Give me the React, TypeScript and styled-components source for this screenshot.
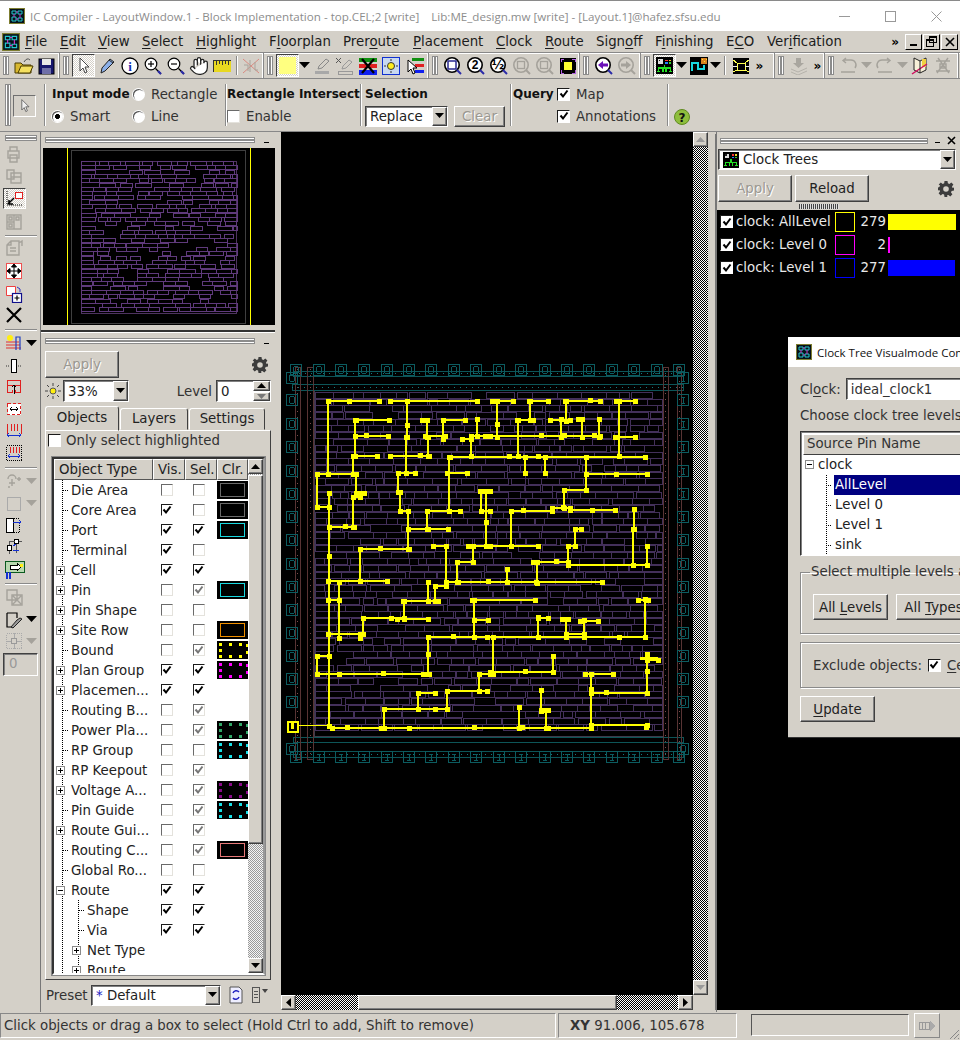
import React from "react";
import styled, { createGlobalStyle, css } from "styled-components";
import { Hand } from "lucide-react";

const FACE = "#d4d0c8";
const DIS = "#a5a29b";
const FONT = `"DejaVu Sans", sans-serif`;

const Global = createGlobalStyle`
  html, body { margin: 0; padding: 0; background: ${FACE}; }
  * { box-sizing: border-box; }
`;

const raised = css`
  border: 1px solid;
  border-color: #fff #404040 #404040 #fff;
  box-shadow: inset -1px -1px 0 #808080;
`;
const sunken = css`
  border: 1px solid;
  border-color: #404040 #fff #fff #404040;
  box-shadow: inset 1px 1px 0 #808080;
`;

const Root = styled.div`
  position: relative;
  width: 960px;
  height: 1040px;
  overflow: hidden;
  background: ${FACE};
  font: 13.33px ${FONT};
  color: #1c1c1c;
  display: flex;
  flex-direction: column;
  border-top: 1px solid #8a8a8a;
`;

/* ---------- title ---------- */
const TitleBar = styled.div`
  height: 30px;
  background: #fff;
  display: flex;
  align-items: center;
  padding-left: 9px;
  flex: none;
`;
const TitleText = styled.div`
  margin-left: 5px;
  font: 11.6px "Open Sans", sans-serif;
  color: #8d8d8d;
  white-space: pre;
  flex: 1;
`;
const WinBtn = styled.div`
  width: 46px;
  display: flex;
  justify-content: center;
  &:last-child { margin-right: 1px; }
`;

/* ---------- menu ---------- */
const MenuBar = styled.div`
  height: 21px;
  flex: none;
  display: flex;
  align-items: center;
  padding-left: 2px;
`;
const MenuList = styled.div`
  flex: 1;
  height: 21px;
  line-height: 21px;
  display: flex;
  padding-left: 5px;
`;
const MenuItem = styled.span<{ $w: number }>`
  width: ${(p) => p.$w}px;
  flex: none;
  white-space: nowrap;
  u { text-underline-offset: 2px; text-decoration-thickness: 1px; }
`;
const MdiBtn = styled.div`
  ${raised};
  box-shadow: none;
  border-color: #fff #000 #000 #fff;
  width: 17px;
  height: 16px;
  display: flex;
  align-items: center;
  justify-content: center;
`;
const Chevrons = styled.span`
  font: bold 12px ${FONT};
  color: #000;
  letter-spacing: -1px;
`;
const MdiWrap = styled.div`
  display: flex;
  align-items: center;
  gap: 1px;
  padding-right: 2px;
  ${Chevrons} { margin-right: 6px; }
`;

/* ---------- tool bar ---------- */
const ToolBar = styled.div`
  height: 27px;
  flex: none;
  display: flex;
  border-top: 1px solid #888;
  border-bottom: 1px solid #888;
  box-shadow: inset 0 1px 0 #fff;
`;
const ToolGroup = styled.div<{ $w: number }>`
  width: ${(p) => p.$w}px;
  flex: none;
  display: flex;
  align-items: center;
  padding-left: 3px;
  border-right: 1px solid #888;
  box-shadow: inset -1px 0 0 #fff;
`;
const Grip = styled.div`
  width: 6px;
  height: 19px;
  flex: none;
  margin-right: 3px;
  border: 1px solid #8c8c8c;
  background: linear-gradient(90deg, #fff 0 1px, #8c8c8c 1px 3px, #fff 3px);
`;
const Tool = styled.div<{ $w?: number; $on?: boolean }>`
  width: ${(p) => p.$w ?? 23}px;
  height: 23px;
  flex: none;
  display: flex;
  align-items: center;
  justify-content: center;
  ${(p) =>
    p.$on &&
    css`
      ${sunken};
      box-shadow: none;
      background: repeating-conic-gradient(#fff 0 25%, #d4d0c8 0 50%) 0 0 / 2px 2px;
    `}
`;
const ToolSep = styled.div`
  width: 8px;
  height: 19px;
  flex: none;
  background: linear-gradient(90deg, transparent 3px, #888 3px 4px, #fff 4px 5px, transparent 5px);
`;
const More = styled(Chevrons)`
  flex: none;
  width: 14px;
  text-align: center;
`;

/* ---------- options bar ---------- */
const OptionBar = styled.div`
  height: 53px;
  flex: none;
  display: flex;
  align-items: stretch;
  padding: 5px 0 5px 5px;
  border-bottom: 1px solid #888;
`;
const OptGrip = styled(Grip)`
  height: 100%;
  margin-right: 2px;
`;
const BigIcon = styled.div`
  border: 1px solid;
  border-color: #707070 #fff #fff #707070;
  width: 23px;
  height: 22px;
  margin: 11px 8px 0 0;
  display: flex;
  align-items: center;
  justify-content: center;
`;
const OptSep = styled.div`
  width: 2px;
  flex: none;
  background: linear-gradient(90deg, #8a8a8a 1px, #fff 1px);
`;
const OptSection = styled.div<{ $w: number; $cols: string; $pad?: number }>`
  width: ${(p) => p.$w}px;
  flex: none;
  display: grid;
  grid-template-columns: ${(p) => p.$cols};
  grid-auto-rows: 22px;
  align-items: center;
  align-content: center;
  white-space: nowrap;
  padding-left: ${(p) => p.$pad ?? 0}px;
`;
const Bold = styled.span`
  font-weight: bold;
  font-size: 12px;
  color: #111;
`;
const Labeled = styled.label`
  display: inline-flex;
  align-items: center;
  gap: 6px;
  color: #333;
`;
const RadioDot = styled.span<{ $on?: boolean }>`
  width: 11px;
  height: 11px;
  flex: none;
  margin-right: 1px;
  border-radius: 50%;
  background: ${(p) => (p.$on ? "radial-gradient(circle, #000 0 2.2px, #fff 2.8px)" : "#fff")};
  box-shadow: inset 1px 1px 0 #555, 0 0 0 1px #fff;
`;
const Box = styled.span<{ $dark?: boolean }>`
  width: 13px;
  height: 13px;
  flex: none;
  display: inline-flex;
  align-items: center;
  justify-content: center;
  background: #fff;
  border: 1px solid;
  border-color: #6a6a6a #e4e2dc #e4e2dc #6a6a6a;
  ${(p) => p.$dark && css`border-color: #1a1a1a #fff #fff #1a1a1a;`}
`;
const Check = ({ on, dim, dark }: { on?: boolean; dim?: boolean; dark?: boolean }) => (
  <Box $dark={dark}>
    {on && (
      <svg width="10" height="10" viewBox="0 0 10 10">
        <path d="M1.5 4.5 L4 7.5 L8.5 1.5" fill="none" stroke={dim ? "#777" : "#000"} strokeWidth="2" />
      </svg>
    )}
  </Box>
);
const Combo = styled.div<{ $w: number; $h?: number }>`
  ${sunken};
  width: ${(p) => p.$w}px;
  height: ${(p) => p.$h ?? 22}px;
  background: #fff;
  display: flex;
  align-items: center;
  padding-left: 4px;
  overflow: hidden;
  flex: none;
`;
const ComboText = styled.span`
  flex: 1;
  min-width: 0;
  white-space: nowrap;
  color: #222;
`;
const Star = styled.span`
  color: #2020c0;
`;
const ComboBtn = styled.div`
  ${raised};
  background: ${FACE};
  width: 15px;
  height: 100%;
  flex: none;
  display: flex;
  align-items: center;
  justify-content: center;
`;
const ComboArrow = () => (
  <ComboBtn>
    <svg width="9" height="6" viewBox="0 0 9 6">
      <path d="M0 0h9L4.5 5z" fill="#000" />
    </svg>
  </ComboBtn>
);
const PushBtn = styled.button<{ $w: number; $h?: number; $off?: boolean }>`
  ${raised};
  width: ${(p) => p.$w}px;
  height: ${(p) => p.$h ?? 27}px;
  background: ${FACE};
  font: 13.33px ${FONT};
  padding: 0;
  flex: none;
  color: ${(p) => (p.$off ? "#9b9891" : "#222")};
  text-shadow: ${(p) => (p.$off ? "1px 1px 0 #fff" : "none")};
  u { text-underline-offset: 2px; text-decoration-thickness: 1px; }
`;
const ClearCell = styled.div`
  display: flex;
  gap: 6px;
  align-items: center;
`;
const HelpWrap = styled.div`
  margin: 24px 0 0 4px;
  flex: none;
  line-height: 0;
`;

/* ---------- main ---------- */
const Main = styled.div`
  flex: 1;
  min-height: 0;
  display: flex;
`;
const SideBar = styled.div`
  width: 41px;
  flex: none;
  border-right: 1px solid #777;
  padding: 3px 0 0 0;
  display: flex;
  flex-direction: column;
  align-items: flex-start;
`;
const HGrip = styled.div<{ $w?: number }>`
  height: 6px;
  width: ${(p) => (p.$w ? `${p.$w}px` : "100%")};
  flex: none;
  border: 1px solid #8c8c8c;
  background: linear-gradient(#fff 0 1px, #8c8c8c 1px 3px, #fff 3px);
`;
const SideGrip = styled(HGrip)`
  margin: 0 0 3px 5px;
`;
const SideTool = styled.div<{ $h?: number }>`
  width: 40px;
  height: ${(p) => p.$h ?? 22}px;
  flex: none;
  display: flex;
  align-items: center;
  padding-left: 5px;
  gap: 3px;
`;
const SideOn = styled.div`
  ${sunken};
  box-shadow: none;
  width: 23px;
  height: 21px;
  display: flex;
  align-items: center;
  justify-content: center;
  margin-left: -2px;
  background: repeating-conic-gradient(#fff 0 25%, #d4d0c8 0 50%) 0 0 / 2px 2px;
`;
const SideSep = styled.div<{ $t?: number }>`
  width: 32px;
  height: 2px;
  margin: ${(p) => p.$t ?? 0}px 0 0 5px;
  flex: none;
  background: linear-gradient(#8a8a8a 1px, #fff 1px);
`;
const SideInput = styled.div`
  ${sunken};
  width: 35px;
  height: 23px;
  margin: 1px 0 0 3px;
  color: #999;
  padding: 2px 0 0 5px;
  flex: none;
`;

const Dock = styled.div`
  width: 240px;
  flex: none;
  display: flex;
  flex-direction: column;
  padding-right: 6px;
`;
const DockHead = styled.div<{ $flush?: boolean }>`
  height: 16px;
  flex: none;
  display: flex;
  align-items: center;
  padding: 0 0 0 ${(p) => (p.$flush ? 0 : 4)}px;
  gap: 9px;
`;
const Dash = styled.span`
  width: 5px;
  height: 1px;
  margin-top: 4px;
  background: #000;
  flex: none;
`;
const Minimap = styled.div`
  height: 177px;
  margin-left: 2px;
  background: #000;
  flex: none;
  line-height: 0;
`;
const Divider = styled.div`
  height: 2px;
  margin-top: 5px;
  background: #333;
  box-shadow: 0 1px 0 #fff;
  flex: none;
`;
const DockBody = styled.div`
  padding: 1px 0 0 4px;
  flex: 1;
  display: flex;
  flex-direction: column;
`;
const ApplyRow = styled.div`
  display: flex;
  align-items: center;
  justify-content: space-between;
  padding: 2px 7px 0 0;
  flex: none;
`;
const ZoomRow = styled.div`
  display: flex;
  align-items: center;
  height: 22px;
  margin-top: 2px;
  padding-right: 4px;
  flex: none;
`;
const SunWrap = styled.div`
  margin-right: 2px;
  line-height: 0;
  flex: none;
`;
const LevelLabel = styled.span`
  margin-left: auto;
  margin-right: 4px;
  color: #333;
`;
const Spin = styled.div`
  display: flex;
  flex-direction: column;
  height: 100%;
  width: 17px;
  flex: none;
  gap: 1px;
`;
const SpinBtn = styled.div`
  ${raised};
  background: ${FACE};
  flex: 1;
  display: flex;
  align-items: center;
  justify-content: center;
`;
const TabRow = styled.div`
  display: flex;
  margin-top: 4px;
  height: 24px;
  flex: none;
`;
const Tab = styled.div<{ $w: number; $on?: boolean }>`
  width: ${(p) => p.$w}px;
  height: ${(p) => (p.$on ? 25 : 22)}px;
  margin-top: ${(p) => (p.$on ? 0 : 2)}px;
  margin-right: 1px;
  border: 1px solid;
  border-color: #fff #404040 transparent #fff;
  border-radius: 3px 3px 0 0;
  text-align: center;
  line-height: ${(p) => (p.$on ? 21 : 20)}px;
  position: relative;
  z-index: 1;
  color: #222;
`;
const TabPage = styled.div`
  width: 226px;
  height: 550px;
  flex: none;
  border: 1px solid;
  border-color: #fff #404040 #404040 #fff;
  padding: 0 6px 0 6px;
`;
const OnlyRow = styled(Labeled)`
  height: 19px;
  margin: 0 0 7px -4px;
  gap: 5px;
  display: flex;
`;
const TableBox = styled.div`
  border: 2px solid;
  border-color: #333 #999 #fff #333;
  outline: 1px solid #888;
  height: 518px;
  display: flex;
  width: 213px;
  background: #fff;
`;
const TableCol = styled.div`
  flex: none;
  width: 194px;
  overflow: hidden;
`;
const TableHead = styled.div`
  display: grid;
  grid-template-columns: 99px 32px 32px 31px;
  height: 21px;
  background: ${FACE};
`;
const HeadCell = styled.div`
  border: 1px solid;
  border-color: #fff #555 #555 #fff;
  line-height: 19px;
  padding-left: 4px;
  white-space: nowrap;
  overflow: hidden;
  color: #222;
`;
const TreeRow = styled.div`
  display: grid;
  grid-template-columns: 99px 32px 32px 31px;
  height: 20px;
  align-items: center;
`;
const NameCell = styled.div<{ $depth: number }>`
  height: 20px;
  padding-left: ${(p) => (p.$depth ? 25 : 9)}px;
  display: flex;
  align-items: center;
  white-space: nowrap;
  overflow: hidden;
  color: #222;
  background-image: ${(p) =>
    p.$depth
      ? "repeating-linear-gradient(#000 0 1px, transparent 1px 2px), repeating-linear-gradient(#000 0 1px, transparent 1px 2px)"
      : "repeating-linear-gradient(#000 0 1px, transparent 1px 2px)"};
  background-size: ${(p) => (p.$depth ? "1px 100%, 1px 100%" : "1px 100%")};
  background-position: ${(p) => (p.$depth ? "8px 0, 24px 0" : "8px 0")};
  background-repeat: no-repeat;
`;
const HDots = styled.span`
  width: 6px;
  height: 1px;
  flex: none;
  margin-right: 2px;
  background: repeating-linear-gradient(90deg, #000 0 1px, transparent 1px 2px);
`;
const Expander = styled.span`
  width: 9px;
  height: 9px;
  flex: none;
  margin-left: -7px;
  margin-right: 6px;
  background: #fff;
  border: 1px solid #8a8a8a;
  display: flex;
  align-items: center;
  justify-content: center;
  line-height: 0;
`;
const CheckCell = styled.div`
  display: flex;
  justify-content: center;
  padding-right: 4px;
  ${Box} { width: 12px; height: 12px; }
`;
const SwatchCell = styled.div`
  height: 20px;
  line-height: 0;
`;
const ListScroll = styled.div`
  width: 15px;
  flex: none;
  display: flex;
  flex-direction: column;
  background: repeating-conic-gradient(#9a9a9a 0 25%, #f4f4f4 0 50%) 0 0 / 2px 2px;
`;
const ScrollBtn = styled.div`
  ${raised};
  background: ${FACE};
  width: 15px;
  height: 15px;
  flex: none;
  display: flex;
  align-items: center;
  justify-content: center;
`;
const ScrollThumb = styled.div<{ $h: number }>`
  ${raised};
  background: ${FACE};
  height: ${(p) => p.$h}px;
  flex: none;
  margin-top: 1px;
`;
const Spacer = styled.div`
  flex: 1;
`;
const PresetRow = styled.div`
  display: flex;
  align-items: center;
  height: 22px;
  margin-top: 4px;
  padding-left: 1px;
  flex: none;
  color: #333;
`;
const PresetName = styled.span`
  width: 45px;
  flex: none;
`;
const PresetIcons = styled.div`
  display: flex;
  margin-left: 7px;
  gap: 7px;
  align-items: center;
`;

const CanvasCol = styled.div`
  width: 427px;
  flex: none;
  display: flex;
  flex-direction: column;
`;
const CanvasRow = styled.div`
  height: 863px;
  flex: none;
  display: flex;
`;
const Canvas = styled.div`
  width: 412px;
  height: 100%;
  flex: none;
  background: #000;
  line-height: 0;
`;
const VScroll = styled.div`
  width: 15px;
  flex: none;
  display: flex;
  flex-direction: column;
  justify-content: space-between;
  background: repeating-conic-gradient(#000 0 25%, #fff 0 50%) 0 0 / 2px 2px;
`;
const HScroll = styled.div`
  height: 15px;
  width: 412px;
  flex: none;
  display: flex;
  background: repeating-conic-gradient(#000 0 25%, #fff 0 50%) 0 0 / 2px 2px;
`;
const HStip = styled.div<{ $w: number }>`
  width: ${(p) => p.$w}px;
  flex: none;
`;
const HThumb = styled.div`
  ${raised};
  background: ${FACE};
  width: 259px;
  flex: none;
`;

const RightDock = styled.div`
  width: 244px;
  margin-left: 8px;
  flex: none;
  display: flex;
  flex-direction: column;
  border-left: 1px solid #777;
  box-shadow: -3px 0 0 -2px #777;
`;
const RightHead = styled(DockHead)`
  padding: 0 4px 0 3px;
  gap: 7px;
  height: 17px;
`;
const PanelCombo = styled(Combo)`
  margin-left: 1px;
  gap: 4px;
`;
const RightBtns = styled.div`
  display: flex;
  align-items: center;
  gap: 3px;
  padding: 5px 6px 0 1px;
  flex: none;
`;
const GearWrap = styled.div`
  margin-left: auto;
  line-height: 0;
`;
const DragDots = styled.div`
  height: 8px;
  flex: none;
  display: flex;
  justify-content: center;
  padding: 2px 0 1px;
  &::before {
    content: "";
    width: 40px;
    margin-right: 40px;
    background: repeating-linear-gradient(90deg, #444 0 1px, #ddd 1px 2px);
  }
`;
const ClockList = styled.div`
  flex: 1;
  background: #000;
  margin-bottom: 2px;
`;
const ClockRow = styled.div`
  display: grid;
  grid-template-columns: 16px 99px 21px 32px auto;
  height: 23px;
  align-items: center;
  padding-left: 3px;
  color: #e8e8e8;
`;
const ClockLabel = styled.span`
  white-space: nowrap;
  overflow: hidden;
`;
const ClockSwatch = styled.span<{ $c: string }>`
  width: 20px;
  height: 20px;
  border: 1px solid ${(p) => p.$c};
`;
const ClockCount = styled.span`
  text-align: right;
  padding-right: 2px;
`;
const ClockBar = styled.span<{ $c: string }>`
  height: 16px;
  background: ${(p) => p.$c};
  display: block;
`;
const StatusBar = styled.div`
  height: 28px;
  flex: none;
  display: flex;
  padding-top: 1px;
  color: #333;
`;
const StatusMsg = styled.div<{ $w: number }>`
  width: ${(p) => p.$w}px;
  height: 25px;
  flex: none;
  margin-right: 2px;
  border: 1px solid;
  border-color: #888 #fff #fff #888;
  padding-left: 3px;
  line-height: 23px;
  white-space: nowrap;
  overflow: hidden;
`;
const StatusXY = styled(StatusMsg)`
  padding-left: 11px;
`;
const Progress = styled.div`
  width: 158px;
  height: 22px;
  flex: none;
  margin: 1px 0 0 12px;
  border: 1px solid;
  border-color: #555 #fff #fff #555;
`;
const StatusIco = styled.div`
  width: 26px;
  height: 25px;
  flex: none;
  margin-left: 5px;
  border: 1px solid;
  border-color: #fff #888 #888 #fff;
  display: flex;
  align-items: center;
  justify-content: center;
`;
const SizeGrip = styled.div`
  margin: auto 0 0 auto;
  line-height: 0;
  flex: none;
`;

/* ---------- dialog ---------- */
const Dialog = styled.div`
  position: absolute;
  left: 788px;
  top: 336px;
  width: 320px;
  height: 401px;
  background: ${FACE};
  border-bottom: 1px solid #333;
`;
const DlgTitle = styled.div`
  height: 30px;
  background: #fff;
  display: flex;
  align-items: center;
  padding-left: 8px;
  gap: 5px;
  font: 11.5px "Open Sans", sans-serif;
  color: #111;
  white-space: nowrap;
`;
const DlgBody = styled.div`
  padding: 11px 0 0 12px;
  color: #333;
  display: flex;
  flex-direction: column;
`;
const DlgRow = styled.div`
  display: flex;
  align-items: center;
  height: 22px;
  gap: 5px;
  flex: none;
  u { text-underline-offset: 2px; text-decoration-thickness: 1px; }
`;
const DlgText = styled.div`
  margin-top: 5px;
  height: 21px;
  line-height: 21px;
  white-space: nowrap;
  flex: none;
`;
const DlgTree = styled.div`
  border: 1px solid;
  border-color: #333 #fff #fff #333;
  box-shadow: inset 1px 1px 0 #808080;
  margin-top: 5px;
  height: 125px;
  width: 300px;
  background: #fff;
  flex: none;
  padding: 2px 0 0 2px;
  overflow: hidden;
`;
const DlgHead = styled.div`
  border: 1px solid;
  border-color: #fff #404040 #404040 #fff;
  background: ${FACE};
  height: 21px;
  line-height: 18px;
  padding-left: 3px;
  color: #333;
`;
const DlgLine = styled.div<{ $root?: boolean }>`
  height: 20px;
  display: flex;
  align-items: center;
  padding-left: ${(p) => (p.$root ? 9 : 23)}px;
  padding-bottom: ${(p) => (p.$root ? 2 : 0)}px;
  color: #222;
  background-image: ${(p) => (p.$root ? "none" : "repeating-linear-gradient(#000 0 1px, transparent 1px 2px)")};
  background-size: 1px 100%;
  background-position: 23px 0;
  background-repeat: no-repeat;
`;
const DlgRoot = styled.span`
  margin-left: -2px;
`;
const DlgLabel = styled.span<{ $sel?: boolean }>`
  ${(p) => p.$sel && css`
    background: #000080;
    color: #fff;
    flex: 1;
  `}
  height: 20px;
  line-height: 20px;
  padding-left: 1px;
`;
const Fieldset = styled.fieldset`
  margin: 9px 0 0 0;
  padding: 0 0 0 12px;
  width: 300px;
  height: 69px;
  border: 1px solid #8a8a8a;
  box-shadow: 1px 1px 0 #fff, inset 1px 1px 0 #fff;
  flex: none;
  display: flex;
  gap: 8px;
  align-items: flex-start;
  white-space: nowrap;
`;
const Legend = styled.legend`
  padding: 0 1px;
  margin-left: -3px;
  line-height: 14px;
  color: #333;
`;
const FieldBtn = styled(PushBtn)`
  margin-top: 15px;
`;
const PlainBox = styled.div`
  margin-top: 8px;
  width: 300px;
  height: 46px;
  flex: none;
  border: 1px solid #8a8a8a;
  box-shadow: 1px 1px 0 #fff, inset 1px 1px 0 #fff;
  padding-left: 12px;
  display: flex;
  align-items: center;
  gap: 6px;
  white-space: nowrap;
  u { text-underline-offset: 2px; text-decoration-thickness: 1px; }
`;
const UpdateWrap = styled.div`
  margin-top: 8px;
  flex: none;
`;

/* ---------- drawn icons ---------- */
type SP = { s?: number; children: React.ReactNode };
const I = ({ s = 20, children }: SP) => (
  <svg width={s} height={s} viewBox="0 0 20 20">
    {children}
  </svg>
);
const Logo = ({ s = 18 }: { s?: number }) => (
  <svg width={s} height={s} viewBox="0 0 16 16">
    <rect x="0.5" y="0.5" width="15" height="15" fill="#07121a" stroke="#7d7d30" />
    <path d="M3 3h4v3H3zM9 3h4v3H9zM3 9h4v4H3zM9 10h4v3H9z" fill="none" stroke="#25c8cf" />
    <path d="M7 4h2M5 6v3M7 11h2M11 6v4" stroke="#cf3ac9" fill="none" />
  </svg>
);
const ClockIcon = ({ s = 20 }: { s?: number }) => (
  <svg width={s} height={s} viewBox="0 0 20 20" shapeRendering="crispEdges">
    <rect width="20" height="20" fill="#000" />
    <rect x="2" y="2" width="6" height="6" fill="#ddd" />
    <rect x="3" y="3" width="2" height="2" fill="#222" />
    <rect x="11" y="3" width="3" height="2" fill="#f33" />
    <rect x="15" y="3" width="3" height="2" fill="#f0d020" />
    <rect x="11" y="6" width="3" height="2" fill="#2a7cff" />
    <rect x="15" y="6" width="3" height="2" fill="#2bd52b" />
    <path d="M9 9h2v3h7v4h-2v-2h-3v2h-2v-2h-2v2h-2v-2H4v2H2v-4h7z" fill="#22e022" />
    <rect x="1" y="16" width="4" height="2" fill="#22e022" />
    <rect x="7" y="16" width="2" height="2" fill="#22e022" />
    <rect x="11" y="16" width="2" height="2" fill="#22e022" />
    <rect x="15" y="16" width="4" height="2" fill="#22e022" />
  </svg>
);
const Arrow = ({ c = "#000", fill = "#fff", s = 20 }: { c?: string; fill?: string; s?: number }) => (
  <I s={s}>
    <path d="M6 2v13l3-3 2 5 2-1-2-5h4z" fill={fill} stroke={c} strokeWidth="1" />
  </I>
);
const DropArrow = ({ c = "#000" }: { c?: string }) => (
  <svg width="11" height="7" viewBox="0 0 11 7">
    <path d="M0 0h11L5.5 6z" fill={c} />
  </svg>
);
const Magnifier = ({ kind }: { kind: "+" | "-" | "box" | "off" | "arrowL" | "arrowR" | "one" | "half" }) => {
  const dis = kind === "off" || kind === "arrowR";
  const col = dis ? DIS : "#000";
  if (kind === "+" || kind === "-") {
    return (
      <svg width="20" height="20" viewBox="0 0 20 20">
        <circle cx="8" cy="8" r="5.8" fill="#fff" stroke="#000" strokeWidth="1.200" />
        <path d="M12.500 12.500l5.500 5.500" stroke="#000" strokeWidth="1.200" />
        <path d="M15 15l3 3" stroke="#2a2aa8" strokeWidth="2.200" />
        <path d="M5 8h6" stroke="#000" strokeWidth="1.200" />
        {kind === "+" && <path d="M8 5v6" stroke="#000" strokeWidth="1.200" />}
      </svg>
    );
  }
  return (
    <svg width="21" height="21" viewBox="0 0 21 21">
      <circle cx="10" cy="10" r="7.200" fill={dis ? "none" : "#fff"} stroke={col} strokeWidth="1.600" />
      <path d="M15 15l4 4" stroke={dis ? DIS : "#2a2aa8"} strokeWidth="2" />
      {kind === "box" && <rect x="6" y="6" width="8" height="8" fill="#fff" stroke="#2a2a90" strokeWidth="1.500" />}
      {kind === "off" && <rect x="6.500" y="6.500" width="7" height="7" fill="none" stroke={DIS} strokeWidth="1.300" />}
      {kind === "arrowL" && <path d="M5 10l5-4v2.500h5v3h-5V14z" fill="#6a10b8" />}
      {kind === "arrowR" && <path d="M15 10l-5-4v2.500H5v3h5V14z" fill={DIS} />}
      {kind === "one" && (
        <text x="10" y="14" fontSize="12" fontFamily="Liberation Sans" fontWeight="bold" textAnchor="middle" fill="#000">2</text>
      )}
      {kind === "half" && (
        <text x="10" y="14" fontSize="12" fontFamily="DejaVu Sans" fontWeight="bold" textAnchor="middle" fill="#000">½</text>
      )}
    </svg>
  );
};
const Gear = ({ s = 16 }: { s?: number }) => (
  <svg width={s} height={s} viewBox="0 0 16 16">
    <path d="M6.500 0h3l.4 2.300 1.500.6L13.300 1.500l2.100 2.100-1.400 1.900.6 1.500L16 6.500v3l-2.400.4-.6 1.500 1.400 1.900-2.100 2.100-1.900-1.400-1.500.6L9.500 16h-3l-.4-2.400-1.500-.6-1.900 1.400-2.100-2.100L2 10.400l-.6-1.500L0 9.500v-3l1.400-.4.6-1.500L.7 3.600l2.100-2.100 1.900 1.400 1.500-.6z" fill="#3c3c3c" />
    <circle cx="8" cy="8" r="2.800" fill={FACE} />
  </svg>
);
const Grey = ({ d, w = 18 }: { d: string; w?: number }) => (
  <svg width={w} height={w} viewBox="0 0 18 18">
    <path d={d} fill="none" stroke={DIS} strokeWidth="1.400" />
  </svg>
);

/* ---------- canvas data ---------- */
const rng = (seed: number) => () => {
  seed |= 0;
  seed = (seed + 0x6d2b79f5) | 0;
  let t = Math.imul(seed ^ (seed >>> 15), 1 | seed);
  t = (t + Math.imul(t ^ (t >>> 7), 61 | t)) ^ t;
  return ((t ^ (t >>> 14)) >>> 0) / 4294967296;
};

function bricks(x0: number, x1: number, y0: number, y1: number, step: number, seed: number, minW: number, maxW: number, gapP: number, gapMax: number) {
  const r = rng(seed);
  let d = "";
  for (let y = y0; y + step <= y1 + 0.01; y += step) {
    let x = x0;
    const yy = Math.round(y) + 0.5;
    const h = Math.max(3, Math.round(step - 0.5));
    while (x < x1 - 3) {
      const w = Math.min(Math.round(minW + r() * (maxW - minW)), x1 - x);
      if (w < 2) break;
      if (r() > gapP) d += `M${x + 0.5} ${yy}h${w}v${h}h-${w}z`;
      x += w + (r() < 0.5 ? Math.round(r() * gapMax) : 0);
    }
  }
  return d;
}

const H: [number, number, number][] = [
  [402,328,379],[402,390,477],[402,492,513],[421,356,389],[437,355,388],[457,353,377],[475,317,356],[508,317,329],[494,356,364],
  [528,329,354],[498,353,360],[457,390,429],[421,422,427],[437,425,445],[421,443,465],[437,471,490],[440,462,471],[458,450,645],
  [474,447,467],[512,427,460],[530,408,448],[512,400,408],[474,398,415],[550,360,409],[547,433,446],[547,468,490],[563,457,473],
  [512,481,490],[492,480,490],[402,529,548],[421,517,533],[437,485,600],[402,565,600],[421,550,570],[420,578,582],[402,616,635],
  [438,615,635],[475,586,647],[491,564,586],[509,552,570],[511,570,615],[512,511,552],[547,490,538],[566,568,647],[563,533,568],
  [547,568,575],[530,575,581],[582,328,387],[583,446,602],[602,403,438],[587,435,446],[620,397,428],[619,363,404],[635,328,363],
  [601,328,339],[601,472,535],[621,474,488],[638,428,645],[675,317,429],[657,317,329],[729,332,591],[710,384,447],[692,447,487],
  [694,418,435],[675,479,490],[673,490,553],[619,538,548],[620,562,568],[635,566,584],[622,580,598],[601,638,648],[661,647,658],
  [675,585,613],[726,591,647],[694,591,647],[711,541,548],
];
const V: [number, number, number][] = [
  [328,402,475],[407,402,438],[406,438,474],[355,421,457],[353,457,475],[317,475,508],[356,475,494],[329,494,727],[353,498,528],
  [360,494,498],[428,438,457],[427,421,438],[443,421,440],[477,420,437],[471,437,457],[449,458,512],[427,512,530],[408,512,550],
  [400,493,512],[398,474,493],[360,550,582],[446,547,583],[473,547,563],[457,563,583],[486,492,547],[481,492,512],[497,402,438],
  [530,402,421],[518,421,457],[566,402,422],[561,420,438],[582,420,438],[599,420,438],[619,402,457],[525,458,474],[545,458,474],
  [586,458,491],[564,491,509],[511,512,547],[634,510,530],[633,530,566],[647,547,566],[568,547,566],[575,530,547],[537,563,584],
  [507,570,583],[428,583,602],[435,587,602],[404,602,620],[363,619,635],[339,583,639],[360,635,639],[474,601,638],[428,638,675],
  [317,657,675],[384,710,729],[447,692,710],[418,694,710],[479,675,692],[493,638,675],[553,657,673],[538,618,638],[566,620,638],
  [584,621,638],[645,600,638],[647,655,694],[591,675,729],[541,691,712],[546,711,729],[519,708,729],
];
const wirePath =
  H.map(([y, a, b]) => `M${a} ${y}H${b}`).join("") + V.map(([x, a, b]) => `M${x} ${a}V${b}`).join("");

const viaPath = (() => {
  const r = rng(77);
  let d = "";
  const sq = (x: number, y: number) => {
    d += `M${x - 2} ${y - 2}h5v5h-5z`;
  };
  H.forEach(([y, a, b]) => {
    sq(a, y);
    sq(b, y);
    let x = a + 10 + r() * 25;
    while (x < b - 6) {
      if (r() < 0.6) sq(Math.round(x), y - (r() < 0.5 ? 1 : 0));
      x += 20 + r() * 30;
    }
  });
  V.forEach(([x, a, b]) => {
    sq(x, a);
    sq(x, b);
    let y = a + 14 + r() * 18;
    while (y < b - 6) {
      if (r() < 0.35) sq(x, Math.round(y));
      y += 30 + r() * 30;
    }
  });
  return d;
})();

const TOPX = [296,319,341,364,387,409,431,454,476,499,521,545,567,589,612,634,657,679];
const SIDEY = [379,401,425,448,472,495,518,541,565,588,611,634,657,680,703,750];

const brickPath = bricks(315, 662, 393, 737, 6.65, 11, 8, 28, 0.08, 4);
const miniPath = bricks(81, 237, 161, 313, 4.3, 5, 8, 16, 0.24, 7);

const PortBox = ({ x, y, glyph }: { x: number; y: number; glyph?: "I" | "0" }) => (
  <g fill="none" stroke="#0c5c60">
    <rect x={x - 5.5} y={y - 5.5} width="11" height="11" />
    {glyph === "I" ? (
      <path d={`M${x - 2} ${y - 3}h4M${x} ${y - 3}v6M${x - 2} ${y + 3}h4`} />
    ) : (
      <rect x={x - 2.5} y={y - 3.5} width="5" height="7" rx="2" />
    )}
  </g>
);

const Layout = () => (
  <svg width="412" height="863" viewBox="281 133 412 863" shapeRendering="crispEdges">
    <path d={brickPath} fill="none" stroke="#43305a" />
    <rect x="314.500" y="391.500" width="349" height="346" fill="none" stroke="#3f3a4a" />
    <g>
      <rect x="293" y="372" width="390" height="5" fill="#000" stroke="#0d5558" />
      <rect x="292" y="385" width="391" height="6" fill="#000" stroke="#0d5558" />
      <rect x="293" y="738" width="390" height="5" fill="#000" stroke="#0d5558" />
      <rect x="293" y="752" width="390" height="6" fill="#000" stroke="#0d5558" />
      <path d="M293 374.500H683M292 388.500H683M293 755.500H683" stroke="#0f7a7e" strokeDasharray="1 5" />
    </g>
    <g fill="none" stroke="#583434">
      <rect x="295" y="368" width="5" height="392" />
      <rect x="307" y="368" width="6" height="392" />
      <rect x="663" y="368" width="5" height="392" />
      <rect x="677" y="368" width="4" height="392" />
    </g>
    <path d="M297.500 370V758M310.500 370V758M665.500 370V758M679.500 370V758" stroke="#7a4a4a" strokeDasharray="1 5" />
    {TOPX.map((x) => (
      <React.Fragment key={x}>
        <PortBox x={x} y={371} />
        <PortBox x={x} y={758} glyph="I" />
      </React.Fragment>
    ))}
    {SIDEY.map((y) => (
      <React.Fragment key={y}>
        <PortBox x={292} y={y} />
        <PortBox x={683} y={y} glyph={y < 520 ? "I" : "0"} />
      </React.Fragment>
    ))}
    <path d={wirePath} stroke="#ffff00" strokeWidth="2" fill="none" />
    <path d={viaPath} fill="#ffff00" />
    <path d="M297 726H330" stroke="#ffff00" />
    <rect x="287.500" y="722.500" width="10" height="10" fill="#000" stroke="#ffff00" strokeWidth="2" />
    <rect x="291" y="724" width="3" height="6" fill="#ffff00" />
    <rect x="640" y="658" width="18" height="3" fill="#ffff00" />
    <rect x="644" y="726" width="5" height="5" fill="#ffff00" />
  </svg>
);

const MiniMap = () => (
  <svg width="232" height="177" viewBox="43 148 232 177" shapeRendering="crispEdges">
    <path d="M67.500 148V325M250.500 148V325" stroke="#ffff00" />
    <rect x="71.500" y="150.500" width="174" height="173" fill="none" stroke="#3f3f3f" />
    <rect x="81.500" y="161.500" width="155" height="152" fill="none" stroke="#4e3360" />
    <path d={miniPath} fill="none" stroke="#5f3a7c" />
  </svg>
);

const Swatch = ({ kind, c }: { kind: "line" | "dots"; c: string }) => (
  <svg width="31" height="20" viewBox="0 0 31 20" shapeRendering="crispEdges">
    <rect y="1" width="31" height="18" fill="#000" />
    {kind === "line" ? (
      <rect x="3.500" y="3.500" width="24" height="13" fill="none" stroke={c} />
    ) : (
      <path
        d="M2 3h3v3H2zM12 3h3v3h-3zM22 3h3v3h-3zM29 4h2v3h-2zM2 9h3v3H2zM29 11h2v3h-2zM2 15h3v3H2zM12 15h3v3h-3zM22 15h3v3h-3z"
        fill={c}
      />
    )}
  </svg>
);

type Row = {
  n: string;
  d?: number;
  e?: "+" | "-";
  v?: 0 | 1;
  sl?: 0 | 1 | 2;
  sw?: ["line" | "dots", string];
  none?: boolean;
};
const ROWS: Row[] = [
  { n: "Die Area", v: 0, sl: 0, sw: ["line", "#6a6a6a"] },
  { n: "Core Area", v: 1, sl: 0, sw: ["line", "#6a6a6a"] },
  { n: "Port", v: 1, sl: 1, sw: ["line", "#18d8e0"] },
  { n: "Terminal", v: 1, sl: 0 },
  { n: "Cell", e: "+", v: 1, sl: 1 },
  { n: "Pin", e: "+", v: 0, sl: 2, sw: ["line", "#18d8e0"] },
  { n: "Pin Shape", e: "+", v: 0, sl: 0 },
  { n: "Site Row", e: "+", v: 0, sl: 0, sw: ["line", "#f09000"] },
  { n: "Bound", v: 0, sl: 2, sw: ["dots", "#ffff00"] },
  { n: "Plan Group", e: "+", v: 1, sl: 1, sw: ["dots", "#ff00ff"] },
  { n: "Placemen...", e: "+", v: 1, sl: 1 },
  { n: "Routing B...", v: 0, sl: 2 },
  { n: "Power Pla...", v: 0, sl: 2, sw: ["dots", "#30a868"] },
  { n: "RP Group", v: 0, sl: 0, sw: ["dots", "#18e0e8"] },
  { n: "RP Keepout", e: "+", v: 0, sl: 2 },
  { n: "Voltage A...", e: "+", v: 0, sl: 2, sw: ["dots", "#8a0a8a"] },
  { n: "Pin Guide", v: 0, sl: 2, sw: ["dots", "#18e0e8"] },
  { n: "Route Gui...", e: "+", v: 0, sl: 2 },
  { n: "Routing C...", v: 0, sl: 2, sw: ["line", "#e87878"] },
  { n: "Global Ro...", v: 0, sl: 0 },
  { n: "Route", e: "-", v: 1, sl: 1 },
  { n: "Shape", d: 1, v: 1, sl: 1 },
  { n: "Via", d: 1, v: 1, sl: 1 },
  { n: "Net Type", d: 1, e: "+", none: true },
  { n: "Route ...", d: 1, e: "+", none: true },
];

const Exp = ({ k }: { k: "+" | "-" }) => (
  <Expander>
    <svg width="7" height="7" viewBox="0 0 7 7" shapeRendering="crispEdges">
      <path d={k === "+" ? "M1 3.500h5M3.500 1v5" : "M1 3.500h5"} stroke="#000" />
    </svg>
  </Expander>
);

const MENU: [React.ReactNode, number][] = [
  [<><u>F</u>ile</>, 35],
  [<><u>E</u>dit</>, 38],
  [<><u>V</u>iew</>, 44],
  [<><u>S</u>elect</>, 54],
  [<><u>H</u>ighlight</>, 73],
  [<>F<u>l</u>oorplan</>, 74],
  [<>Prer<u>o</u>ute</>, 70],
  [<><u>P</u>lacement</>, 83],
  [<><u>C</u>lock</>, 49],
  [<><u>R</u>oute</>, 51],
  [<>Sign<u>o</u>ff</>, 59],
  [<>F<u>i</u>nishing</>, 71],
  [<>E<u>C</u>O</>, 41],
  [<>Ver<u>i</u>fication</>, 90],
];

const Tri = ({ up, c = "#000" }: { up?: boolean; c?: string }) => (
  <svg width="9" height="5" viewBox="0 0 9 5">
    <path d={up ? "M4.500 0L9 5H0z" : "M0 0h9L4.500 5z"} fill={c} />
  </svg>
);
const TriSide = ({ left, c = "#000" }: { left?: boolean; c?: string }) => (
  <svg width="5" height="9" viewBox="0 0 5 9">
    <path d={left ? "M5 0v9L0 4.500z" : "M0 0v9l5-4.500z"} fill={c} />
  </svg>
);

export default function App() {
  return (
    <Root>
      <Global />
      <TitleBar>
        <Logo s={16} />
        <TitleText>IC Compiler - LayoutWindow.1 - Block Implementation - top.CEL;2 [write]    Lib:ME_design.mw [write] - [Layout.1]@hafez.sfsu.edu</TitleText>
        <WinBtn>
          <svg width="11" height="11" viewBox="0 0 11 11"><path d="M0 5.500h11" stroke="#999" /></svg>
        </WinBtn>
        <WinBtn>
          <svg width="11" height="11" viewBox="0 0 11 11"><rect x=".5" y=".5" width="10" height="10" fill="none" stroke="#999" /></svg>
        </WinBtn>
        <WinBtn>
          <svg width="11" height="11" viewBox="0 0 11 11"><path d="M.5.5l10 10M10.500.5l-10 10" stroke="#999" /></svg>
        </WinBtn>
      </TitleBar>

      <MenuBar>
        <Logo s={18} />
        <MenuList>
          {MENU.map(([t, w], i) => (
            <MenuItem key={i} $w={w}>{t}</MenuItem>
          ))}
        </MenuList>
        <MdiWrap>
          <Chevrons>»</Chevrons>
          <MdiBtn><svg width="9" height="9" viewBox="0 0 9 9" shapeRendering="crispEdges"><path d="M1 6.500h7v2H1z" fill="#000" /></svg></MdiBtn>
          <MdiBtn><svg width="11" height="11" viewBox="0 0 11 11" shapeRendering="crispEdges"><path d="M3.500.5h7v6h-7zM.5 3.500h7v7h-7z" fill="none" stroke="#000" /><path d="M3.500 1h7M.5 4.500h7" stroke="#000" /></svg></MdiBtn>
          <MdiBtn><svg width="10" height="10" viewBox="0 0 10 10"><path d="M1 1l8 8M9 1l-8 8" stroke="#000" strokeWidth="1.600" /></svg></MdiBtn>
        </MdiWrap>
      </MenuBar>

      <ToolBar>
        <ToolGroup $w={60}>
          <Grip />
          <Tool>
            <I>
              <path d="M1 7h6l2 2h8v8H1z" fill="#d8b830" stroke="#4a3c00" />
              <path d="M4 17l3-7h12l-3 7z" fill="#f4e060" stroke="#4a3c00" />
              <path d="M10 6q3-5 6-2" fill="none" stroke="#555" />
            </I>
          </Tool>
          <Tool>
            <I>
              <rect x="2" y="3" width="15" height="15" fill="#17176e" stroke="#000" />
              <rect x="5" y="3" width="9" height="6" fill="#e8e8e8" />
              <rect x="5" y="12" width="9" height="6" fill="#6f6fa8" />
            </I>
          </Tool>
        </ToolGroup>
        <ToolGroup $w={204}>
          <Grip />
          <Tool $on><Arrow c="#444" /></Tool>
          <Tool>
            <I>
              <path d="M4 17l1-5L13 3l4 3-9 9z" fill="#8cb0e8" stroke="#222" />
              <path d="M12 4l4 3" stroke="#222" />
            </I>
          </Tool>
          <Tool>
            <I>
              <circle cx="10" cy="10" r="8" fill="#fff" stroke="#000" strokeWidth="1.300" />
              <text x="10" y="15" fontSize="13" fontWeight="bold" fontFamily="Liberation Serif" textAnchor="middle" fill="#1530b0">i</text>
            </I>
          </Tool>
          <Tool><Magnifier kind="+" /></Tool>
          <Tool><Magnifier kind="-" /></Tool>
          <Tool><Hand size={20} fill="#fff" color="#222" strokeWidth={1.500} /></Tool>
          <Tool>
            <svg width="18" height="12" viewBox="0 0 18 12" shapeRendering="crispEdges">
              <rect x="0" y="0" width="18" height="12" fill="#e8d820" stroke="#333" />
              <path d="M3 1v4M6 1v3M9 1v4M12 1v3M15 1v4" stroke="#333" />
            </svg>
          </Tool>
          <ToolSep />
          <Tool $w={20}>
            <svg width="18" height="18" viewBox="0 0 18 18">
              <path d="M1 2l16 14M17 2L1 16" stroke="#d88a80" />
              <path d="M2 8h4v6M8 3v12M13 5v8h3" stroke="#a8a49c" fill="none" />
            </svg>
          </Tool>
        </ToolGroup>
        <ToolGroup $w={165}>
          <Grip />
          <Tool $on>
            <svg width="17" height="17"><rect width="17" height="17" fill="#ffff80" /></svg>
          </Tool>
          <Tool $w={11}><DropArrow /></Tool>
          <Tool>
            <I>
              <rect x="3" y="15" width="14" height="3" fill="#a8a8a8" />
              <path d="M6 13l1-3 7-7 3 2-7 7z" fill={FACE} stroke="#888" />
            </I>
          </Tool>
          <Tool>
            <I>
              <rect x="3.500" y="15.500" width="14" height="3" fill="none" stroke="#999" />
              <path d="M7 13l1-3 6-6 3 2-6 6z" fill={FACE} stroke="#999" />
              <path d="M1 2l5 5M6 2L1 7" stroke="#555" />
            </I>
          </Tool>
          <Tool>
            <svg width="18" height="18" viewBox="0 0 18 18" shapeRendering="crispEdges">
              <rect width="18" height="4" y="1" fill="#109010" />
              <rect width="18" height="4" y="7" fill="#e02020" />
              <rect width="18" height="5" y="13" fill="#1020f0" />
              <path d="M3 2l12 14M15 2L3 16" stroke="#000" strokeWidth="2.200" shapeRendering="auto" />
            </svg>
          </Tool>
          <Tool $w={24}>
            <svg width="18" height="18" viewBox="0 0 18 18">
              <rect x=".5" y=".5" width="17" height="17" fill="#c8d8f0" stroke="#1030d0" />
              <circle cx="9" cy="9" r="3.500" fill="#ffee20" stroke="#333" />
              <path d="M2 9h2M14 9h2M9 2v2M9 14v2" stroke="#333" />
            </svg>
          </Tool>
          <Tool>
            <svg width="18" height="18" viewBox="0 0 18 18" shapeRendering="crispEdges">
              <rect x="6" y="1" width="12" height="3" fill="#109010" />
              <rect x="9" y="7" width="9" height="3" fill="#e02020" />
              <rect x="9" y="13" width="9" height="3" fill="#1020f0" />
              <path d="M2 3v12l3-3 2 5 2-1-2-5h4z" fill="#fff" stroke="#000" shapeRendering="auto" />
            </svg>
          </Tool>
        </ToolGroup>
        <ToolGroup $w={151}>
          <Grip />
          <Tool><Magnifier kind="box" /></Tool>
          <Tool><Magnifier kind="one" /></Tool>
          <Tool><Magnifier kind="half" /></Tool>
          <Tool><Magnifier kind="off" /></Tool>
          <Tool><Magnifier kind="off" /></Tool>
          <Tool>
            <svg width="16" height="16" viewBox="0 0 16 16" shapeRendering="crispEdges">
              <rect width="16" height="16" fill="#000" />
              <rect x="4" y="4" width="8" height="8" fill="#ffff30" />
              <path d="M1 4V1h3M12 1h3v3M1 12v3h3M12 15h3v-3" fill="none" stroke="#b060e0" />
            </svg>
          </Tool>
        </ToolGroup>
        <ToolGroup $w={61}>
          <Grip />
          <Tool><Magnifier kind="arrowL" /></Tool>
          <Tool><Magnifier kind="arrowR" /></Tool>
        </ToolGroup>
        <ToolGroup $w={134}>
          <Grip />
          <Tool $on><ClockIcon s={17} /></Tool>
          <Tool $w={11}><DropArrow /></Tool>
          <Tool>
            <svg width="18" height="18" viewBox="0 0 18 18" shapeRendering="crispEdges">
              <rect width="18" height="18" fill="#000" />
              <path d="M2 14V6h6v6h6V8" fill="none" stroke="#18d8e0" strokeWidth="1.500" />
              <rect x="11" y="1" width="6" height="6" fill="#d88020" />
              <path d="M12 2h1v1h-1zM14 4h1v1h-1zM16 2h1v1h-1z" fill="#ffe030" />
            </svg>
          </Tool>
          <Tool $w={11}><DropArrow /></Tool>
          <ToolSep />
          <Tool>
            <svg width="16" height="16" viewBox="0 0 16 16" shapeRendering="crispEdges">
              <rect width="16" height="16" fill="#000" />
              <path d="M4 5h8v7H4zM0 2l4 3M16 2l-4 3M0 14l4-2M16 14l-4-2" fill="none" stroke="#ffff50" />
              <path d="M0 8h4M12 8h4" stroke="#eee" />
            </svg>
          </Tool>
          <More>»</More>
        </ToolGroup>
        <ToolGroup $w={50}>
          <Grip />
          <Tool>
            <svg width="18" height="18" viewBox="0 0 18 18">
              <path d="M6 1h5v5h3l-5.500 5L3 6h3z" fill="#a9a69f" />
              <path d="M1 12l7 3 9-4M1 15l7 3 9-4" fill="none" stroke="#b5b2ab" />
            </svg>
          </Tool>
          <More>»</More>
        </ToolGroup>
        <ToolGroup $w={134}>
          <Grip />
          <Tool>
            <Grey d="M15 11a5 5 0 0 0-4-8H4M6 1L3 3.500 6 6M1 15h14" />
          </Tool>
          <Tool $w={12}><DropArrow c={DIS} /></Tool>
          <Tool $w={24}>
            <Grey d="M3 11a5 5 0 0 1 4-8h7M12 1l3 2.500L12 6M3 15h14" />
          </Tool>
          <Tool $w={12}><DropArrow c={DIS} /></Tool>
          <Tool>
            <svg width="18" height="18" viewBox="0 0 18 18">
              <path d="M9 4L3 1v12l6 3 6-3V1z" fill="#f8f0d8" stroke="#222" />
              <rect x="11" y="2" width="4" height="8" fill="#f0d040" />
              <path d="M1 17L16 7" stroke="#d01060" strokeWidth="1.500" />
              <path d="M9 4v12" stroke="#222" />
            </svg>
          </Tool>
          <Tool>
            <Grey d="M2 4h14M2 14h14M4 1l11 15M14 1L3 16M6 7h6v4H6z" />
          </Tool>
        </ToolGroup>
      </ToolBar>

      <OptionBar>
        <OptGrip />
        <BigIcon><Arrow s={16} c="#555" fill="#eee" /></BigIcon>
        <OptSep />
        <OptSection $w={179} $pad={6} $cols="81px 1fr">
          <Bold>Input mode</Bold>
          <Labeled><RadioDot />Rectangle</Labeled>
          <Labeled><RadioDot $on />Smart</Labeled>
          <Labeled><RadioDot />Line</Labeled>
        </OptSection>
        <OptSep />
        <OptSection $w={133} $cols="1fr">
          <Bold>Rectangle Intersect</Bold>
          <Labeled><Check />Enable</Labeled>
        </OptSection>
        <OptSep />
        <OptSection $w={148} $pad={3} $cols="1fr">
          <Bold>Selection</Bold>
          <ClearCell>
            <Combo $w={83} $h={21}><ComboText>Replace</ComboText><ComboArrow /></Combo>
            <PushBtn $w={51} $h={21} $off>Clear</PushBtn>
          </ClearCell>
        </OptSection>
        <OptSep />
        <OptSection $w={155} $pad={1} $cols="44px 1fr">
          <Bold>Query</Bold>
          <Labeled><Check on dark />Map</Labeled>
          <span />
          <Labeled><Check on dark />Annotations</Labeled>
        </OptSection>
        <OptSep />
        <HelpWrap>
          <svg width="18" height="18" viewBox="0 0 18 18">
            <circle cx="9" cy="9" r="7.500" fill="#8fbe3c" stroke="#5f8a20" />
            <text x="9" y="13.500" fontSize="12" fontWeight="bold" fontFamily="DejaVu Sans" textAnchor="middle" fill="#111">?</text>
          </svg>
        </HelpWrap>
      </OptionBar>

      <Main>
        <SideBar>
          <SideGrip $w={32} />
          <SideTool $h={22}>
            <Grey d="M5 5V1h7v4M3 5h11v7H3zM5 9h7v7H5z" />
          </SideTool>
          <SideTool $h={22}>
            <Grey d="M2 2h7v9H2zM6 5h10v4H6zM6 9h10v6H6z" />
          </SideTool>
          <SideTool $h={21}>
            <SideOn>
              <svg width="18" height="18" viewBox="0 0 18 18">
                <rect x="9.500" y="2.500" width="7" height="6" fill="#fff" stroke="#e02020" />
                <path d="M1 1v14h15" fill="none" stroke="#000" strokeDasharray="1 1" />
                <path d="M8 8l-6 6M3 10v4h4" fill="none" stroke="#000" strokeWidth="1.500" />
              </svg>
            </SideOn>
          </SideTool>
          <SideTool $h={26}>
            <Grey d="M2 2h14v14H2zM2 9h7M9 2v14M4 4h3v3H4zM4 11h3v3H4zM11 4h3v3h-3z" />
          </SideTool>
          <SideSep />
          <SideTool $h={22}>
            <Grey d="M2 6l4-4h8v14H2zM6 2v4H2M14 4l3-2v5M5 9h6M5 12h6" />
          </SideTool>
          <SideTool $h={23}>
            <svg width="18" height="18" viewBox="0 0 18 18">
              <rect x="1.500" y="1.500" width="15" height="15" fill="#fff" stroke="#ee5050" />
              <path d="M9 2v14M2 9h14M9 2L6.500 5h5zM9 16l-2.500-3h5zM2 9l3-2.500v5zM16 9l-3-2.500v5z" stroke="#000" />
            </svg>
          </SideTool>
          <SideTool $h={23}>
            <svg width="18" height="18" viewBox="0 0 18 18">
              <path d="M1.500 1.500h9v9h-9z" fill="#fff" stroke="#ee4040" />
              <rect x="7.500" y="8.500" width="9" height="9" fill="#fff" stroke="#10108a" strokeWidth="1.200" />
              <path d="M9.500 13h5M12 10.500v5" stroke="#000" strokeWidth="1.200" />
              <path d="M12 2l3 2v3" fill="none" stroke="#3030c0" />
            </svg>
          </SideTool>
          <SideTool $h={20}>
            <svg width="18" height="18" viewBox="0 0 18 18">
              <path d="M2 2l14 14M16 2L2 16" stroke="#000" strokeWidth="2.200" />
            </svg>
          </SideTool>
          <SideSep $t={4} />
          <SideTool $h={24}>
            <svg width="18" height="18" viewBox="0 0 18 18">
              <path d="M1 8h13M1 11h14M1 14h15" stroke="#e03030" />
              <path d="M11 16V3h4v13" fill="none" stroke="#2040c0" strokeWidth="1.200" />
              <circle cx="5" cy="4" r="3" fill="#ffee10" />
            </svg>
            <DropArrow />
          </SideTool>
          <SideTool $h={22}>
            <svg width="18" height="18" viewBox="0 0 18 18">
              <rect x="6.500" y="2.500" width="5" height="13" fill="#fff" stroke="#000" />
              <path d="M1 9h4M13 9h4" stroke="#333" strokeDasharray="1 1" />
            </svg>
          </SideTool>
          <SideTool $h={21}>
            <svg width="18" height="18" viewBox="0 0 18 18" shapeRendering="crispEdges">
              <path d="M2.500 1.500h13v5h-13zM2.500 6.500v7h5v-3M15.500 6.500v7h-5v-3" fill="none" stroke="#e02020" />
              <path d="M9 6v9M7 8l2-2 2 2" fill="none" stroke="#000" />
            </svg>
          </SideTool>
          <SideTool $h={22}>
            <svg width="18" height="18" viewBox="0 0 18 18" shapeRendering="crispEdges">
              <rect x="2.500" y="3.500" width="13" height="11" fill="#fff" stroke="#e02020" strokeDasharray="3 2" />
              <path d="M5 9h8M5 9l2-2M5 9l2 2M13 9l-2-2M13 9l-2 2" stroke="#000" />
            </svg>
          </SideTool>
          <SideTool $h={22}>
            <svg width="18" height="18" viewBox="0 0 18 18" shapeRendering="crispEdges">
              <path d="M2 2v10M16 2v10M6 2v7M9 2v7M12 2v7" stroke="#e02020" />
              <path d="M2 13h14M2 13l2-2M2 13l2 2M16 13l-2-2M16 13l-2 2" stroke="#1530d0" />
            </svg>
          </SideTool>
          <SideTool $h={21}>
            <svg width="18" height="18" viewBox="0 0 18 18" shapeRendering="crispEdges">
              <rect x="1.500" y="1.500" width="15" height="15" fill="none" stroke="#000" strokeDasharray="1 1" />
              <path d="M5 3v6M8 3v6M11 3v6M14 3v6" stroke="#e02020" />
              <path d="M3 12h12M3 12l2-2M3 12l2 2M15 12l-2-2M15 12l-2 2" stroke="#1530d0" />
            </svg>
          </SideTool>
          <SideSep $t={4} />
          <SideTool $h={24}>
            <Grey d="M3 7a4 4 0 1 1 8 0M7 7v7M4 11h6M3 15h2M12 7h4M14 5v4" />
            <DropArrow c={DIS} />
          </SideTool>
          <SideTool $h={21}>
            <svg width="18" height="18" viewBox="0 0 18 18"><rect x="2.500" y="2.500" width="13" height="13" fill="none" stroke="#aaa" /></svg>
            <DropArrow c={DIS} />
          </SideTool>
          <SideTool $h={21}>
            <svg width="18" height="18" viewBox="0 0 18 18" shapeRendering="crispEdges">
              <rect x="1.500" y="2.500" width="7" height="14" fill="#fff" stroke="#000" />
              <path d="M9 2.500h5M9 16.500h5M14.500 9v7" stroke="#000" strokeDasharray="1 1" />
              <path d="M8 6h8M14 4l2 2-2 2" fill="none" stroke="#1530d0" />
            </svg>
          </SideTool>
          <SideTool $h={23}>
            <svg width="18" height="18" viewBox="0 0 18 18" shapeRendering="crispEdges">
              <rect x="2.500" y="7.500" width="4" height="5" fill="#fff" stroke="#000" />
              <rect x="9.500" y="1.500" width="4" height="4" fill="#fff" stroke="#000" />
              <path d="M4.500 7V3h5M14 3h3M4.500 13v3M11.500 6v9" fill="none" stroke="#555" />
              <path d="M8 8l3-2M8 12h6" stroke="#1530d0" />
            </svg>
          </SideTool>
          <SideTool $h={23}>
            <svg width="20" height="20" viewBox="0 0 20 20" shapeRendering="crispEdges">
              <rect x=".5" y="1.500" width="19" height="11" fill="#b8d8b0" stroke="#0a5a20" />
              <path d="M5 5h7v-2l4 4-4 4V9H5z" fill="#fff" stroke="#000" />
              <path d="M2 12v7M5 12v7" stroke="#1530d0" strokeWidth="1.500" />
              <path d="M15 4h3v3h-3z" fill="#ffee10" />
            </svg>
          </SideTool>
          <SideSep $t={2} />
          <SideTool $h={24}>
            <Grey d="M2 2h10v10H2zM7 7h10v10H7zM8 8l8 8M16 8l-8 8" />
          </SideTool>
          <SideTool $h={21}>
            <svg width="18" height="18" viewBox="0 0 18 18">
              <path d="M2 2h10v5M2 2v14h7" fill="none" stroke="#000" strokeWidth="1.200" />
              <path d="M6 16l6-7 3-2 2 1-2 2-1 1-6 6z" fill="#9a9a9a" stroke="#222" />
            </svg>
            <DropArrow />
          </SideTool>
          <SideTool $h={22}>
            <svg width="18" height="18" viewBox="0 0 18 18" shapeRendering="crispEdges">
              <rect x="1.500" y="1.500" width="15" height="15" fill="none" stroke="#aaa" strokeDasharray="1 1" />
              <rect x="6.500" y="6.500" width="5" height="5" fill="none" stroke="#999" />
              <path d="M1 9h5M12 9h5M9 1v5M9 12v5" stroke="#aaa" />
            </svg>
            <DropArrow c={DIS} />
          </SideTool>
          <SideInput>0</SideInput>
        </SideBar>

        <Dock>
          <DockHead>
            <HGrip $w={210} />
            <Dash />
          </DockHead>
          <Minimap><MiniMap /></Minimap>
          <Divider />
          <DockBody>
            <DockHead $flush>
              <HGrip $w={210} />
              <Dash />
            </DockHead>
            <ApplyRow>
              <PushBtn $w={74} $off>Apply</PushBtn>
              <GearWrap><Gear /></GearWrap>
            </ApplyRow>
            <ZoomRow>
              <SunWrap>
                <svg width="16" height="16" viewBox="0 0 16 16">
                  <circle cx="8" cy="8" r="3" fill="#ffee10" stroke="#555" />
                  <path d="M8 0v3M8 13v3M0 8h3M13 8h3M2 2l2 2M12 12l2 2M14 2l-2 2M4 12l-2 2" stroke="#444" />
                </svg>
              </SunWrap>
              <Combo $w={66} $h={22}><ComboText>33%</ComboText><ComboArrow /></Combo>
              <LevelLabel>Level</LevelLabel>
              <Combo $w={55} $h={22}>
                <ComboText>0</ComboText>
                <Spin>
                  <SpinBtn><Tri up /></SpinBtn>
                  <SpinBtn><Tri c="#777" /></SpinBtn>
                </Spin>
              </Combo>
            </ZoomRow>
            <TabRow>
              <Tab $w={74} $on>Objects</Tab>
              <Tab $w={68}>Layers</Tab>
              <Tab $w={76}>Settings</Tab>
            </TabRow>
            <TabPage>
              <OnlyRow><Check dark />Only select highlighted</OnlyRow>
              <TableBox>
                <TableCol>
                  <TableHead>
                    <HeadCell>Object Type</HeadCell>
                    <HeadCell>Vis.</HeadCell>
                    <HeadCell>Sel.</HeadCell>
                    <HeadCell>Clr.</HeadCell>
                  </TableHead>
                  {ROWS.map((r) => (
                    <TreeRow key={r.n}>
                      <NameCell $depth={r.d ?? 0}>
                        {r.e ? <Exp k={r.e} /> : <HDots />}
                        {r.n}
                      </NameCell>
                      <CheckCell>{!r.none && <Check on={r.v === 1} dark={r.v === 1} />}</CheckCell>
                      <CheckCell>{!r.none && <Check on={r.sl !== 0} dim={r.sl === 2} dark={r.sl === 1} />}</CheckCell>
                      <SwatchCell>{r.sw && <Swatch kind={r.sw[0]} c={r.sw[1]} />}</SwatchCell>
                    </TreeRow>
                  ))}
                </TableCol>
                <ListScroll>
                  <ScrollBtn><Tri up /></ScrollBtn>
                  <ScrollThumb $h={369} />
                  <Spacer />
                  <ScrollBtn><Tri /></ScrollBtn>
                </ListScroll>
              </TableBox>
            </TabPage>
            <PresetRow>
              <PresetName>Preset</PresetName>
              <Combo $w={130} $h={21}>
                <ComboText><Star>*</Star> Default</ComboText>
                <ComboArrow />
              </Combo>
              <PresetIcons>
                <svg width="16" height="18" viewBox="0 0 16 18">
                  <path d="M2 1h9l3 3v13H2z" fill="#eef" stroke="#555" />
                  <path d="M5 7a3.500 3.500 0 0 1 6-1M11 11a3.500 3.500 0 0 1-6 1" fill="none" stroke="#2020c0" strokeWidth="1.500" />
                </svg>
                <svg width="18" height="18" viewBox="0 0 18 18" shapeRendering="crispEdges">
                  <rect x="1.500" y="1.500" width="7" height="15" fill="none" stroke="#555" />
                  <path d="M3 5h4M3 8h4M3 11h4" stroke="#555" />
                  <path d="M11 3h6l-3 4z" fill="#444" shapeRendering="auto" />
                </svg>
              </PresetIcons>
            </PresetRow>
          </DockBody>
        </Dock>

        <CanvasCol>
          <CanvasRow>
            <Canvas><Layout /></Canvas>
            <VScroll>
              <ScrollBtn><Tri up c="#999" /></ScrollBtn>
              <ScrollBtn><Tri c="#999" /></ScrollBtn>
            </VScroll>
          </CanvasRow>
          <HScroll>
            <ScrollBtn><TriSide left /></ScrollBtn>
            <HStip $w={62} />
            <HThumb />
            <HStip $w={61} />
            <ScrollBtn><TriSide /></ScrollBtn>
          </HScroll>
        </CanvasCol>

        <RightDock>
          <RightHead>
            <HGrip $w={208} />
            <Dash />
            <svg width="9" height="9" viewBox="0 0 9 9"><path d="M1 1l7 7M8 1L1 8" stroke="#000" strokeWidth="1.600" /></svg>
          </RightHead>
          <PanelCombo $w={238} $h={21}>
            <ClockIcon s={16} />
            <ComboText>Clock Trees</ComboText>
            <ComboArrow />
          </PanelCombo>
          <RightBtns>
            <PushBtn $w={74} $off>Apply</PushBtn>
            <PushBtn $w={74}>Reload</PushBtn>
            <GearWrap><Gear /></GearWrap>
          </RightBtns>
          <DragDots />
          <ClockList>
            <ClockRow>
              <Check on dark />
              <ClockLabel>clock: AllLevel</ClockLabel>
              <ClockSwatch $c="#ffff00" />
              <ClockCount>279</ClockCount>
              <ClockBar $c="#ffff00" style={{ width: 68 }} />
            </ClockRow>
            <ClockRow>
              <Check on dark />
              <ClockLabel>clock: Level 0</ClockLabel>
              <ClockSwatch $c="#ff00ff" />
              <ClockCount>2</ClockCount>
              <ClockBar $c="#ff00ff" style={{ width: 2 }} />
            </ClockRow>
            <ClockRow>
              <Check on dark />
              <ClockLabel>clock: Level 1</ClockLabel>
              <ClockSwatch $c="#0000ff" />
              <ClockCount>277</ClockCount>
              <ClockBar $c="#0000ff" style={{ width: 67 }} />
            </ClockRow>
          </ClockList>
        </RightDock>
      </Main>

      <StatusBar>
        <StatusMsg $w={556}>Click objects or drag a box to select (Hold Ctrl to add, Shift to remove)</StatusMsg>
        <StatusXY $w={179}><b>XY</b> 91.006, 105.678</StatusXY>
        <Progress />
        <StatusIco>
          <svg width="16" height="12" viewBox="0 0 16 12" shapeRendering="crispEdges">
            <path d="M.5 2.500h10v7H.5zM3.500 2.500v7M6.500 2.500v7" fill="none" stroke="#999" />
            <path d="M11 1l5 5-5 5z" fill="#aaa" />
          </svg>
        </StatusIco>
        <SizeGrip>
          <svg width="12" height="12" viewBox="0 0 12 12">
            <path d="M11 2L2 11M11 6L6 11M11 10l-1 1" stroke="#888" />
          </svg>
        </SizeGrip>
      </StatusBar>

      <Dialog>
        <DlgTitle>
          <Logo s={16} />
          Clock Tree Visualmode Control
        </DlgTitle>
        <DlgBody>
          <DlgRow>
            <span>Cl<u>o</u>ck:</span>
            <Combo $w={200}>ideal_clock1</Combo>
          </DlgRow>
          <DlgText>Choose clock tree levels to visualize</DlgText>
          <DlgTree>
            <DlgHead>Source Pin Name</DlgHead>
            <DlgLine $root><Exp k="-" /><DlgRoot>clock</DlgRoot></DlgLine>
            <DlgLine><HDots /><DlgLabel $sel>AllLevel</DlgLabel></DlgLine>
            <DlgLine><HDots /><DlgLabel>Level 0</DlgLabel></DlgLine>
            <DlgLine><HDots /><DlgLabel>Level 1</DlgLabel></DlgLine>
            <DlgLine><HDots /><DlgLabel>sink</DlgLabel></DlgLine>
          </DlgTree>
          <Fieldset>
            <Legend>Select multiple levels and types</Legend>
            <FieldBtn $w={75} $h={26}>All <u>L</u>evels</FieldBtn>
            <FieldBtn $w={75} $h={26}>All <u>T</u>ypes</FieldBtn>
          </Fieldset>
          <PlainBox>
            Exclude objects:
            <Check on dark />
            <span><u>C</u>ell</span>
          </PlainBox>
          <UpdateWrap>
            <PushBtn $w={75} $h={26}><u>U</u>pdate</PushBtn>
          </UpdateWrap>
        </DlgBody>
      </Dialog>
    </Root>
  );
}
